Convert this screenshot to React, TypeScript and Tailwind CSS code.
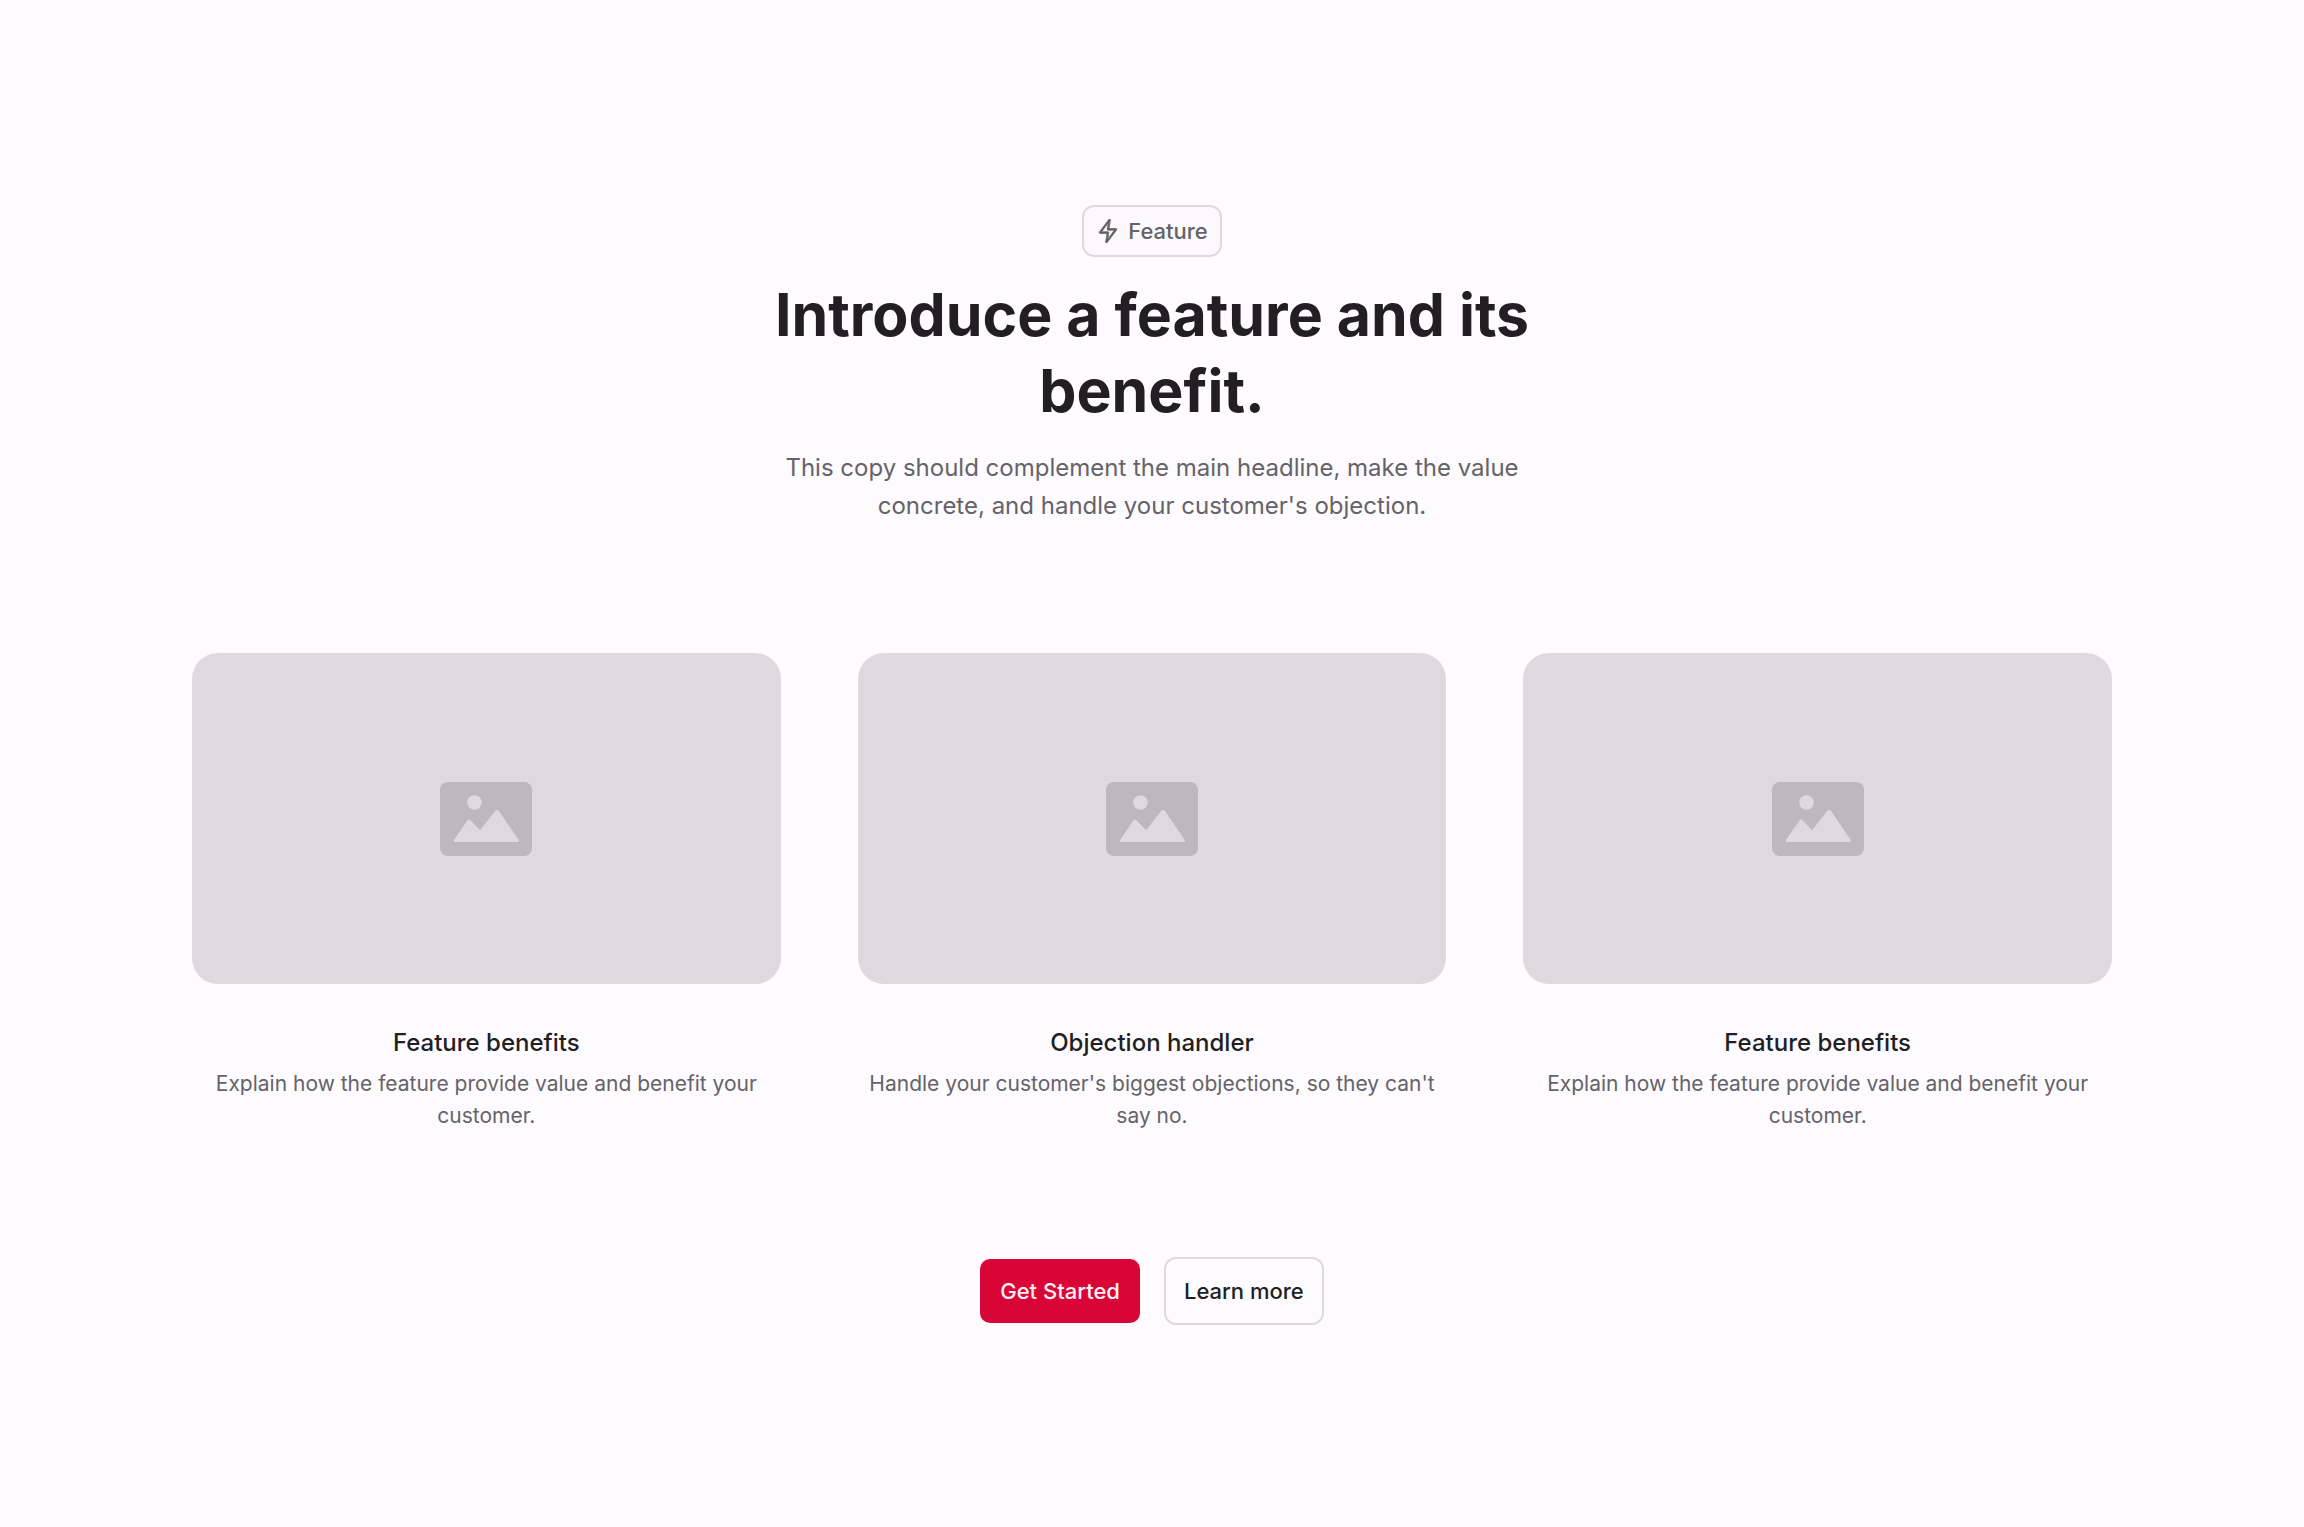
import { RxLightningBolt } from "react-icons/rx";

const features = [
  {
    id: "benefit-1",
    title: "Feature benefits",
    description: "Explain how the feature provide value and benefit your customer.",
  },
  {
    id: "objection",
    title: "Objection handler",
    description: "Handle your customer's biggest objections, so they can't say no.",
  },
  {
    id: "benefit-2",
    title: "Feature benefits",
    description: "Explain how the feature provide value and benefit your customer.",
  },
];

function ImagePlaceholder() {
  return (
    <div className="flex aspect-[16/9] items-center justify-center rounded-[26px] bg-[#dcdadd]">
      <svg viewBox="0 0 92 74" className="w-[92px]" aria-hidden="true">
        <rect width="92" height="74" rx="8" fill="#bbb9bc" />
        <circle cx="34.5" cy="20.500" r="7.300" fill="#dcdadd" />
        <path
          d="M15.500 60c-1.500 0-2.100-1-1.300-2.300L27.300 38.500c1-1.500 2.500-1.500 3.500 0l9.200 9.800 15.200-19.200c1.200-1.400 2.700-1.400 3.800 0l19.600 28.600c.9 1.300.2 2.300-1.300 2.300z"
          fill="#dcdadd"
        />
      </svg>
    </div>
  );
}

export default function App() {
  return (
    <main className="min-h-screen bg-[#fdfbff] px-6 py-[205px] font-['Inter',sans-serif] text-[#211f22]">
      <section className="mx-auto flex max-w-[1920px] flex-col items-center">
        <header className="flex max-w-[800px] flex-col items-center text-center">
          <div className="flex items-center gap-2 rounded-xl border-2 border-[#dcdadd] bg-[#fbf9fc] px-3 py-2 text-[22px] leading-8 font-medium text-[#656367]">
            <RxLightningBolt
              className="h-6 w-6 shrink-0"
              stroke="currentColor"
              strokeWidth="0.5"
              aria-hidden="true"
            />
            Feature
          </div>
          <h1 className="mt-5 text-[59px] leading-[76px] font-bold">
            Introduce a feature and its benefit.
          </h1>
          <p className="mt-5 max-w-[768px] text-[24px] leading-[38px] text-[#656367]">
            This copy should complement the main headline, make the value
            concrete, and handle your customer's objection.
          </p>
        </header>

        <div className="mt-32 grid w-full gap-[77px] md:grid-cols-3">
          {features.map((f) => (
            <article key={f.id}>
              <ImagePlaceholder />
              <div className="mt-10 text-center">
                <h2 className="text-[24px] leading-[38px] font-medium">{f.title}</h2>
                <p className="mt-1.5 text-[21px] leading-8 text-[#656367]">
                  {f.description}
                </p>
              </div>
            </article>
          ))}
        </div>

        <div className="mt-[125px] flex flex-wrap items-center justify-center gap-6">
          <button
            type="button"
            className="rounded-[10px] bg-[#d90536] px-5 py-4 text-[22px] leading-8 font-medium text-[#fdf1f3]"
          >
            Get Started
          </button>
          <button
            type="button"
            className="rounded-xl border-2 border-[#dcdadd] px-[18px] py-4 text-[22px] leading-8 font-medium"
          >
            Learn more
          </button>
        </div>
      </section>
    </main>
  );
}
